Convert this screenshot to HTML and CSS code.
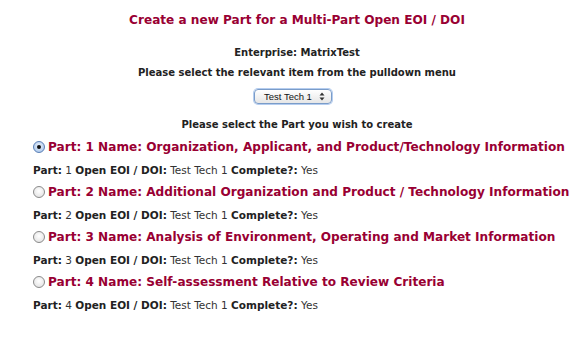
FILE: index.html
```html
<!DOCTYPE html>
<html>
<head>
<meta charset="utf-8">
<link rel="stylesheet" href="styles.css">
</head>
<body>
<div class="page">
  <h1 class="title">Create a new Part for a Multi-Part Open EOI / DOI</h1>
  <p class="center ent">Enterprise: MatrixTest</p>
  <p class="center pull">Please select the relevant item from the pulldown menu</p>
  <div class="selrow">
    <div class="select"><span>Test Tech 1</span><span class="arrows"><svg width="6" height="9" viewBox="0 0 6 9"><path d="M3 0.5 L5.5 3.5 H0.5 Z M3 8.5 L5.5 5.5 H0.5 Z" fill="#333"/></svg></span></div>
  </div>
  <p class="center sel2">Please select the Part you wish to create</p>
  <div class="parts">
    <div class="part">
      <div class="phead"><span class="radio on"><span class="dot"></span></span>Part: 1 Name: Organization, Applicant, and Product/Technology Information</div>
      <div class="pinfo"><b>Part:</b> 1 <b>Open EOI / DOI:</b> Test Tech 1 <b>Complete?:</b> Yes</div>
    </div>
    <div class="part">
      <div class="phead"><span class="radio"></span>Part: 2 Name: Additional Organization and Product / Technology Information</div>
      <div class="pinfo"><b>Part:</b> 2 <b>Open EOI / DOI:</b> Test Tech 1 <b>Complete?:</b> Yes</div>
    </div>
    <div class="part">
      <div class="phead"><span class="radio"></span>Part: 3 Name: Analysis of Environment, Operating and Market Information</div>
      <div class="pinfo"><b>Part:</b> 3 <b>Open EOI / DOI:</b> Test Tech 1 <b>Complete?:</b> Yes</div>
    </div>
    <div class="part">
      <div class="phead"><span class="radio"></span>Part: 4 Name: Self-assessment Relative to Review Criteria</div>
      <div class="pinfo"><b>Part:</b> 4 <b>Open EOI / DOI:</b> Test Tech 1 <b>Complete?:</b> Yes</div>
    </div>
  </div>
</div>
</body>
</html>
```
FILE: styles.css
```css
html, body { margin: 0; padding: 0; background: #fff; }
body { font-family: "DejaVu Sans", Verdana, sans-serif; color: #222; }
.page { padding: 10px 0 0 33px; width: 528px; }
.title { margin: 0; font-size: 12.1px; font-weight: bold; color: #990033; text-align: center; line-height: 20px; }
.center { margin: 0; text-align: center; font-size: 10px; font-weight: bold; color: #222; line-height: 16px; }
.ent { margin-top: 15px; }
.pull { margin-top: 4px; }
.selrow { display: flex; justify-content: center; margin-top: 8px; padding-right: 8px; }
.select { box-sizing: border-box; width: 78px; height: 15px; border: 1px solid #7a9cc9; border-radius: 4px; background: linear-gradient(#fff, #e6e6e6); box-shadow: 0 0 0 1px #b5cdef; display: flex; align-items: center; justify-content: space-between; padding: 0 6px 0 9px; font-family: "Liberation Sans", Arial, sans-serif; font-size: 9.5px; color: #111; }
.arrows { display: flex; align-items: center; }
.sel2 { margin-top: 13px; }
.parts { margin-top: 4px; }
.phead { display: flex; align-items: center; font-size: 12.1px; font-weight: bold; color: #990033; line-height: 20px; white-space: nowrap; }
.radio { box-sizing: border-box; width: 12px; height: 12px; border-radius: 50%; border: 1px solid #8a8a8a; background: radial-gradient(circle at 50% 40%, #fff, #ddd); margin-right: 3px; display: flex; align-items: center; justify-content: center; flex: none; }
.radio.on { border-color: #5b7fb5; background: radial-gradient(circle at 50% 40%, #eef4fc, #9bbde8); }
.dot { width: 4px; height: 4px; border-radius: 50%; background: #111; }
.pinfo { font-size: 10.5px; color: #333; line-height: 16px; margin: 5px 0 4px 0; }
.pinfo b { color: #222; }
```
